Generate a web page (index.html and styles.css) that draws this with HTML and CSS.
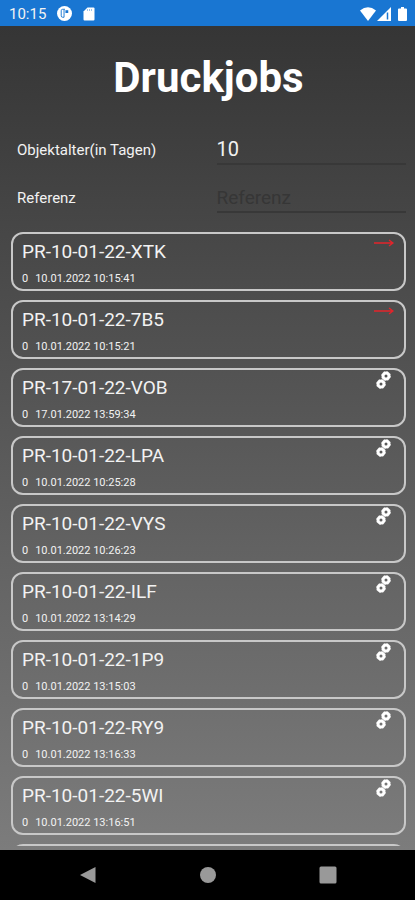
FILE: index.html
```html
<!DOCTYPE html>
<html lang="de">
<head>
<meta charset="utf-8">
<meta name="viewport" content="width=device-width, initial-scale=1">
<title>Druckjobs</title>
<link rel="stylesheet" href="styles.css">
</head>
<body>
<svg class="sprite" aria-hidden="true">
  <symbol id="arrow" viewBox="0 0 20 10">
    <path d="M0 5h18M15 2l4 3-4 3" fill="none" stroke="#e3242b" stroke-width="1.3"/>
  </symbol>
  <symbol id="gears" viewBox="0 0 16 20">
    <g fill="none" stroke="#fff">
      <circle cx="10" cy="6" r="3" stroke-width="3"/>
      <circle cx="10" cy="6" r="4.5" stroke-width="0.6" stroke-dasharray="1.9 1.63"/>
      <circle cx="5" cy="14" r="3" stroke-width="3"/>
      <circle cx="5" cy="14" r="4.5" stroke-width="0.6" stroke-dasharray="1.9 1.63"/>
    </g>
  </symbol>
</svg>
<header class="status">
  <span class="clock">10:15</span>
  <svg class="s-app" viewBox="0 0 16 16" aria-hidden="true">
    <circle cx="8" cy="8" r="8" fill="#fff"/>
    <path d="M8.500 3.500H6Q4.500 3.500 4.500 5v5.500Q4.500 12 6 12h1.500V4" fill="none" stroke="#1976d2" stroke-width="1"/>
    <path d="M9 4.500h3v3H9z" fill="#1976d2"/>
  </svg>
  <svg class="s-card" viewBox="0 0 12 14" aria-hidden="true">
    <path d="M4.500 0.500H10.500a1 1 0 0 1 1 1v11a1 1 0 0 1-1 1H1.500a1 1 0 0 1-1-1V4.500z" fill="#fff"/>
    <path d="M4.500 2v2M6.500 2v2M8.500 2v2" stroke="#9cc4ec" stroke-width="1"/>
  </svg>
  <span class="spacer"></span>
  <svg class="s-wifi" viewBox="0 0 16 14" aria-hidden="true"><path d="M0 3.500Q8-3 16 3.500L8 14z" fill="#fff"/></svg>
  <svg class="s-signal" viewBox="0 0 14 14" aria-hidden="true">
    <path d="M0 14L14 0v14z" fill="#fff"/>
    <path d="M10.500 5.500v7" stroke="#1976d2" stroke-width="1.500"/>
  </svg>
  <svg class="s-battery" viewBox="0 0 9 14" aria-hidden="true"><path d="M3 0h3v1.500h2q1 0 1 1V13q0 1-1 1H1q-1 0-1-1V2.500q0-1 1-1h2z" fill="#fff"/></svg>
</header>
<main class="page">
  <h1 class="title">Druckjobs</h1>
  <form class="filters">
    <label class="label" for="age">Objektalter(in Tagen)</label>
    <input class="field" id="age" type="text" inputmode="numeric" value="10">
    <label class="label" for="ref">Referenz</label>
    <input class="field" id="ref" type="text" placeholder="Referenz">
  </form>
  <ul class="jobs">
    <li class="job"><div class="name">PR-10-01-22-XTK</div><div class="meta"><span>0</span><time>10.01.2022 10:15:41</time></div><svg class="arrow" aria-hidden="true"><use href="#arrow"/></svg></li>
    <li class="job"><div class="name">PR-10-01-22-7B5</div><div class="meta"><span>0</span><time>10.01.2022 10:15:21</time></div><svg class="arrow" aria-hidden="true"><use href="#arrow"/></svg></li>
    <li class="job"><div class="name">PR-17-01-22-VOB</div><div class="meta"><span>0</span><time>17.01.2022 13:59:34</time></div><svg class="gears" aria-hidden="true"><use href="#gears"/></svg></li>
    <li class="job"><div class="name">PR-10-01-22-LPA</div><div class="meta"><span>0</span><time>10.01.2022 10:25:28</time></div><svg class="gears" aria-hidden="true"><use href="#gears"/></svg></li>
    <li class="job"><div class="name">PR-10-01-22-VYS</div><div class="meta"><span>0</span><time>10.01.2022 10:26:23</time></div><svg class="gears" aria-hidden="true"><use href="#gears"/></svg></li>
    <li class="job"><div class="name">PR-10-01-22-ILF</div><div class="meta"><span>0</span><time>10.01.2022 13:14:29</time></div><svg class="gears" aria-hidden="true"><use href="#gears"/></svg></li>
    <li class="job"><div class="name">PR-10-01-22-1P9</div><div class="meta"><span>0</span><time>10.01.2022 13:15:03</time></div><svg class="gears" aria-hidden="true"><use href="#gears"/></svg></li>
    <li class="job"><div class="name">PR-10-01-22-RY9</div><div class="meta"><span>0</span><time>10.01.2022 13:16:33</time></div><svg class="gears" aria-hidden="true"><use href="#gears"/></svg></li>
    <li class="job"><div class="name">PR-10-01-22-5WI</div><div class="meta"><span>0</span><time>10.01.2022 13:16:51</time></div><svg class="gears" aria-hidden="true"><use href="#gears"/></svg></li>
    <li class="job"></li>
  </ul>
</main>
<nav class="nav">
  <button class="key" type="button" aria-label="Zurück"><svg viewBox="0 0 18 18"><path d="M16.500 1v16L1 9z"/></svg></button>
  <button class="key" type="button" aria-label="Startseite"><svg viewBox="0 0 18 18"><circle cx="9" cy="9" r="8"/></svg></button>
  <button class="key" type="button" aria-label="Übersicht"><svg viewBox="0 0 18 18"><rect x="0.500" y="0.500" width="17" height="17" rx="1.500"/></svg></button>
</nav>
</body>
</html>
```
FILE: styles.css
```css
* {
  box-sizing: border-box;
}

body {
  margin: 0;
  height: 100vh;
  display: flex;
  flex-direction: column;
  font-family: Roboto, "Liberation Sans", sans-serif;
  color: #f2f2f2;
  background: #000;
}

.sprite {
  position: absolute;
  width: 0;
  height: 0;
}

.status {
  flex: none;
  display: flex;
  align-items: center;
  height: 26px;
  padding: 1px 8px 0 9px;
  background: #1976d2;
}

.clock {
  font-size: 15px;
  line-height: 20px;
  margin-right: 11px;
}

.s-app {
  width: 15px;
  height: 15px;
  margin-right: 11px;
}

.s-card {
  width: 12px;
  height: 14px;
}

.spacer {
  flex: 1;
}

.s-wifi {
  width: 16px;
  height: 14px;
  margin-right: 1px;
}

.s-signal {
  width: 14px;
  height: 14px;
  margin-right: 7px;
}

.s-battery {
  width: 9px;
  height: 14px;
}

.page {
  flex: 1;
  min-height: 0;
  display: flex;
  flex-direction: column;
  padding: 28px 9px 4px 11px;
  background: linear-gradient(#353535, #7c7c7c);
}

.title {
  margin: 0;
  font-size: 42px;
  line-height: 48px;
  font-weight: 700;
  text-align: center;
  color: #fff;
}

.filters {
  display: grid;
  grid-template-columns: 1fr 1fr;
  column-gap: 10px;
  row-gap: 6px;
  padding: 27px 0 0 6px;
}

.label {
  font-size: 15px;
  line-height: 42px;
}

.field {
  width: 100%;
  min-width: 0;
  height: 36px;
  padding: 8px 0 2px;
  border: 0;
  border-bottom: 2px solid #383838;
  background: none;
  font: 20px/24px Roboto, "Liberation Sans", sans-serif;
  color: #f2f2f2;
  outline: 0;
}

.field::placeholder {
  color: #363636;
  font-size: 19px;
  opacity: 1;
}

.jobs {
  flex: 1;
  min-height: 0;
  overflow-y: auto;
  scrollbar-width: none;
  display: flex;
  flex-direction: column;
  gap: 9px;
  margin: 13px 0 0;
  padding: 0;
  list-style: none;
}

.job {
  position: relative;
  flex: none;
  min-height: 59px;
  padding: 6px 9px 3px;
  border: 2px solid #c8c8c8;
  border-radius: 12px;
}

.name {
  font-size: 19px;
  line-height: 24px;
}

.meta {
  display: flex;
  gap: 7px;
  margin-top: 8px;
  font-size: 11px;
  line-height: 14px;
}

.arrow,
.gears {
  position: absolute;
  top: 4px;
  right: 10px;
  width: 20px;
  height: 10px;
}

.gears {
  top: 0;
  right: 12px;
  width: 16px;
  height: 20px;
}

.nav {
  flex: none;
  height: 50px;
  display: flex;
  justify-content: center;
  gap: 78px;
  background: #000;
}

.key {
  width: 42px;
  display: grid;
  place-items: center;
  padding: 0;
  border: 0;
  background: none;
}

.key svg {
  width: 18px;
  height: 18px;
  fill: #999;
}
```
